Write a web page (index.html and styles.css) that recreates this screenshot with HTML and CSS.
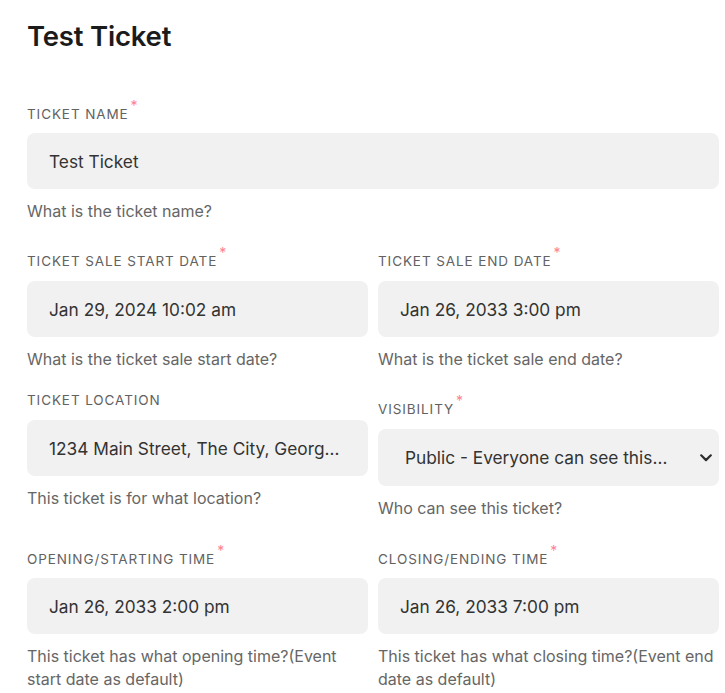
FILE: index.html
```html
<!DOCTYPE html>
<html lang="en">
<head>
<meta charset="utf-8">
<title>Test Ticket</title>
<link rel="stylesheet" href="styles.css">
</head>
<body>
<main class="page">
  <h1 class="title">Test Ticket</h1>
  <div class="field">
    <label class="label">Ticket Name<sup class="req">*</sup></label>
    <input class="control" type="text" value="Test Ticket">
    <p class="help">What is the ticket name?</p>
  </div>
  <div class="grid">
    <div class="field">
      <label class="label">Ticket Sale Start Date<sup class="req">*</sup></label>
      <input class="control" type="text" value="Jan 29, 2024 10:02 am">
      <p class="help">What is the ticket sale start date?</p>
    </div>
    <div class="field">
      <label class="label">Ticket Sale End Date<sup class="req">*</sup></label>
      <input class="control" type="text" value="Jan 26, 2033 3:00 pm">
      <p class="help">What is the ticket sale end date?</p>
    </div>
    <div class="field">
      <label class="label">Ticket Location</label>
      <input class="control" type="text" value="1234 Main Street, The City, Georgia 30301">
      <p class="help">This ticket is for what location?</p>
    </div>
    <div class="field">
      <label class="label">Visibility<sup class="req">*</sup></label>
      <div class="select-wrap">
        <select class="control select">
          <option>Public - Everyone can see this ticket</option>
        </select>
        <svg class="chevron" width="12" height="8" viewBox="0 0 12 8" aria-hidden="true"><path d="M1.2 1.3 L6 6.1 L10.8 1.3" fill="none" stroke="#2e2e2e" stroke-width="2.2" stroke-linecap="round" stroke-linejoin="round"/></svg>
      </div>
      <p class="help">Who can see this ticket?</p>
    </div>
    <div class="field">
      <label class="label">Opening/Starting Time<sup class="req">*</sup></label>
      <input class="control" type="text" value="Jan 26, 2033 2:00 pm">
      <p class="help">This ticket has what opening time?(Event start date as default)</p>
    </div>
    <div class="field">
      <label class="label">Closing/Ending Time<sup class="req">*</sup></label>
      <input class="control" type="text" value="Jan 26, 2033 7:00 pm">
      <p class="help">This ticket has what closing time?(Event end date as default)</p>
    </div>
  </div>
</main>
</body>
</html>
```

FILE: styles.css
```css
* { box-sizing: border-box; }
html, body { margin: 0; padding: 0; background: #fff; }
body {
  font-family: "Inter", "Open Sans", sans-serif;
  color: #333;
}
.page {
  width: 692px;
  margin-left: 27px;
  padding-top: 15.5px;
}
.title {
  margin: 0 0 40px;
  font-size: 27.5px;
  font-weight: 600;
  line-height: 40px;
  color: #1b1b1b;
  letter-spacing: -0.2px;
}
.grid {
  display: grid;
  grid-template-columns: 1fr 1fr;
  column-gap: 10px;
  align-items: start;
}
.field {
  display: flex;
  flex-direction: column;
  align-items: stretch;
  margin-bottom: 20.2px;
}
.label {
  display: block;
  font-size: 13.5px;
  line-height: 18px;
  letter-spacing: 0.9px;
  text-transform: uppercase;
  color: #626262;
  margin-bottom: 11px;
}
.req {
  color: #ff8090;
  font-size: 14px;
  line-height: 20.2px;
  vertical-align: 7.7px;
  margin-left: 2px;
  letter-spacing: 0;
}
.control {
  display: block;
  width: 100%;
  height: 56px;
  border: 0;
  border-radius: 8px;
  background: #f1f1f1;
  padding: 0 26px 0 22px;
  font-family: inherit;
  font-size: 17.3px;
  color: #333;
  text-overflow: ellipsis;
  outline: none;
}
.select-wrap { position: relative; }
.select {
  appearance: none;
  -webkit-appearance: none;
  height: 57.5px;
  padding: 0 47px 0 27px;
  white-space: nowrap;
  overflow: hidden;
}
.chevron {
  position: absolute;
  right: 7px;
  top: 25.5px;
}
.help {
  margin: 11px 0 0;
  font-size: 16px;
  line-height: 23px;
  color: #666;
}
```
